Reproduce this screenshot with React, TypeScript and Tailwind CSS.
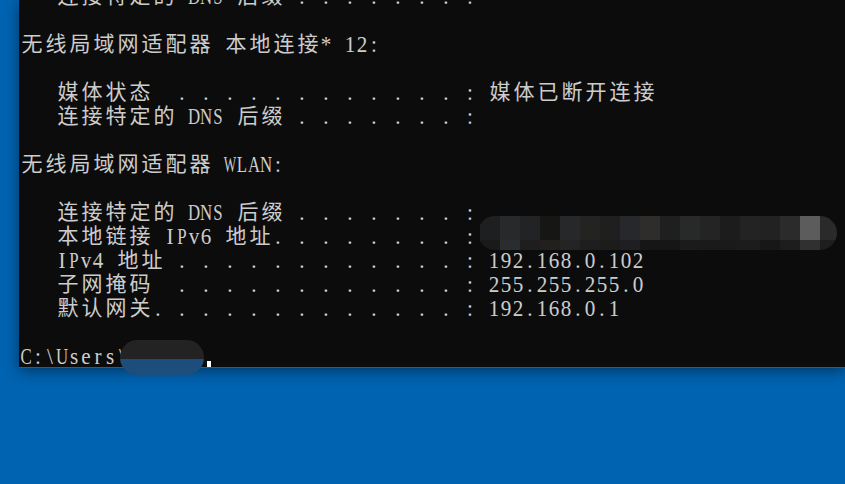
import React from 'react';

const dots = (n: number) => '. '.repeat(n);

const lines: string[] = [
  '   连接特定的 DNS 后缀 ' + dots(7) + ':',
  '',
  '无线局域网适配器 本地连接* 12:',
  '',
  '   媒体状态  ' + dots(12) + ': 媒体已断开连接',
  '   连接特定的 DNS 后缀 ' + dots(7) + ':',
  '',
  '无线局域网适配器 WLAN:',
  '',
  '   连接特定的 DNS 后缀 ' + dots(7) + ':',
  '   本地链接 IPv6 地址' + dots(8) + ':',
  '   IPv4 地址 ' + dots(12) + ': 192.168.0.102',
  '   子网掩码  ' + dots(12) + ': 255.255.255.0',
  '   默认网关' + dots(13) + ': 192.168.0.1',
  '',
  'C:\\Users\\',
];

// mosaic over the IPv6 address, 20px blocks
const mosaicTop = [
  'bg-[#1e1f20]', 'bg-[#28292b]', 'bg-[#222324]', 'bg-[#161614]', 'bg-[#27282a]', 'bg-[#232322]',
  'bg-[#1f1f1f]', 'bg-[#27282b]', 'bg-[#2e2d2b]', 'bg-[#1f1f1f]', 'bg-[#282a2a]', 'bg-[#242424]',
  'bg-[#1c1c1c]', 'bg-[#232323]', 'bg-[#222222]', 'bg-[#2b2b2b]', 'bg-[#5c5c5c]', 'bg-[#2a2a2a]',
];
const mosaicBottom = [
  'bg-[#1a1a1a]', 'bg-[#2b2c2e]', 'bg-[#1e1e1e]', 'bg-[#22201e]', 'bg-[#242424]', 'bg-[#1e1e1e]',
  'bg-[#1c1c1c]', 'bg-[#1f1f22]', 'bg-[#161616]', 'bg-[#161616]', 'bg-[#1b1b1b]', 'bg-[#1a1a1a]',
  'bg-[#1a1a1a]', 'bg-[#1c1c1c]', 'bg-[#171717]', 'bg-[#1d1d1d]', 'bg-[#303030]', 'bg-[#1e1e1e]',
];

const isWide = (ch: string) => /[\u2E80-\u9FFF\uFF00-\uFFEF]/.test(ch);

// Times glyphs are wider than a 12px cell, squeeze them like SimSun does
const squeeze = (ch: string) => {
  if (ch === 'W' || ch === 'M') return 'scale-x-[0.55]';
  if (/[A-HJ-Z]/.test(ch)) return 'scale-x-[0.7]';
  return 'scale-x-[0.88]';
};

const Line: React.FC<{ text: string }> = ({ text }) => (
  <div className="flex h-[24px] whitespace-pre">
    {Array.from(text).map((ch, i) =>
      isWide(ch) ? (
        <span
          key={i}
          className="relative -top-[3px] flex w-[24px] shrink-0 justify-center font-['Noto_Sans_CJK_SC',sans-serif] text-[21px] leading-[24px]"
        >
          {ch}
        </span>
      ) : (
        <span
          key={i}
          className={`relative -top-[1px] flex w-[12px] shrink-0 justify-center font-['Liberation_Serif',serif] text-[24px] leading-[24px] ${squeeze(ch)}`}
        >
          {ch}
        </span>
      )
    )}
  </div>
);

export default function App() {
  return (
    <div className="relative h-[484px] w-[845px] overflow-hidden bg-[#0063b1]">
      <div className="ml-[19px] h-[368px] overflow-hidden border-b border-[#3f5870] bg-[#0c0c0c] pl-px text-[#cccccc] shadow-[0_3px_14px_rgba(0,0,0,0.45)]">
        <div className="-mt-[15px]">
          {lines.map((l, i) => (
            <Line key={i} text={l} />
          ))}
        </div>
      </div>

      {/* pixelated IPv6 address */}
      <div className="absolute left-[478px] top-[216px] flex h-[34px] w-[359px] flex-col overflow-hidden rounded-full">
        <div className="flex h-[24px] pl-[2px]">
          {mosaicTop.map((c, i) => (
            <div key={i} className={`h-full w-[20px] shrink-0 ${c}`} />
          ))}
        </div>
        <div className="flex h-[10px] pl-[2px]">
          {mosaicBottom.map((c, i) => (
            <div key={i} className={`h-full w-[20px] shrink-0 ${c}`} />
          ))}
        </div>
      </div>

      {/* smudged user name */}
      <div className="absolute left-[120px] top-[340px] flex h-[35px] w-[84px] flex-col overflow-hidden rounded-[18px]">
        <div className="h-[19px] bg-[#232323]" />
        <div className="h-[16px] bg-[#1d4e7b]" />
      </div>
      <div className="absolute left-[207px] top-[361px] h-[6px] w-[4px] bg-white" />
    </div>
  );
}
